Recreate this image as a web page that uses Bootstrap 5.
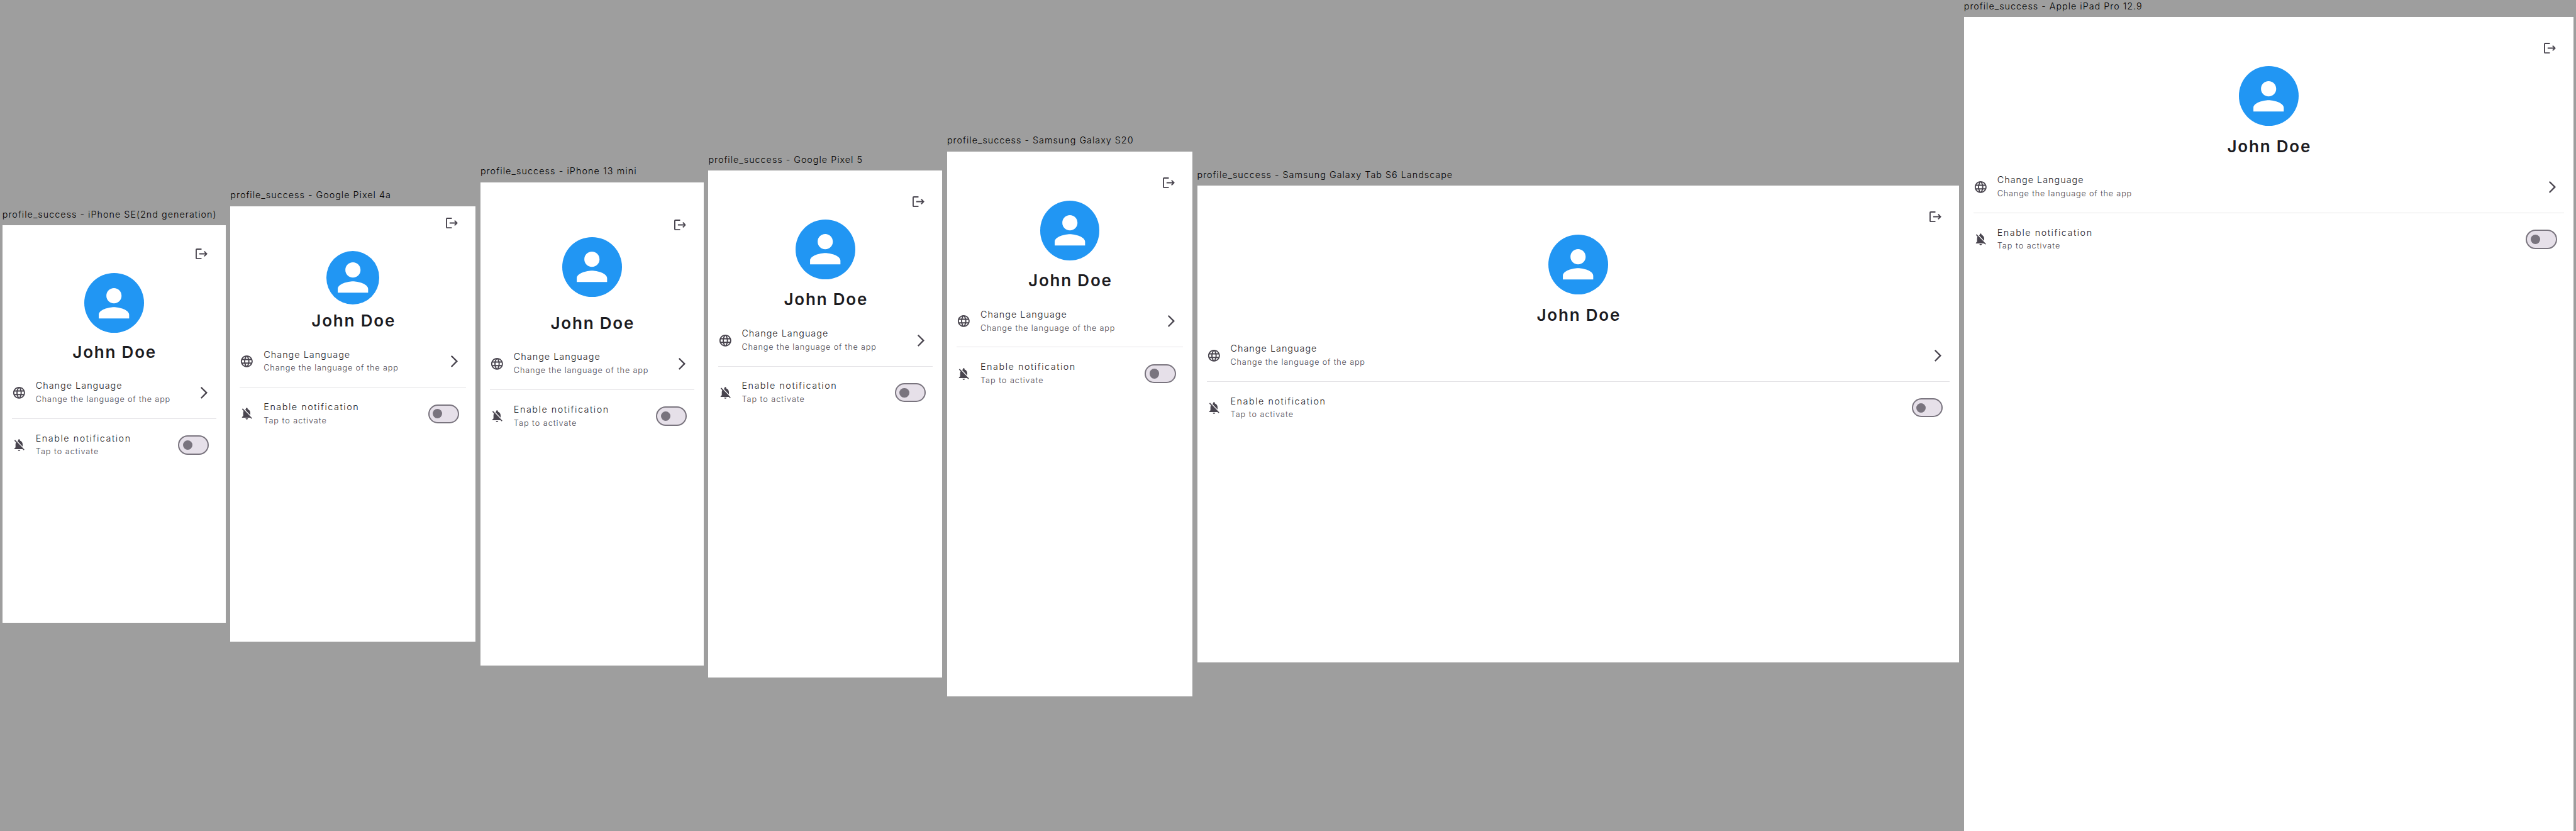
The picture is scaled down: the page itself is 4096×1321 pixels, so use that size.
<!DOCTYPE html>
<html lang="en">
<head>
<meta charset="utf-8">
<meta name="viewport" content="width=device-width, initial-scale=1">
<title>profile_success</title>
<link href="https://cdn.jsdelivr.net/npm/bootstrap@5.3.0/dist/css/bootstrap.min.css" rel="stylesheet">
<style>
  /* 1rem = 10 logical pixels of the device previews */
  html { font-size: 9.46614px; }
  body { background: #9e9e9e; font-family: Inter, sans-serif; font-weight: 300; font-size: 1.52rem; color: #1c1b1f; }
  .board { width: 432.7rem; height: 139.5rem; }
  .device { padding: 0 .4rem; }
  .device-label { height: 2.9rem; line-height: 2.1rem; font-size: 1.52rem; color: #000; }
  .screen { background: #fff; }
  .appbar { height: 5.6rem; padding-right: 3rem; }
  .appbar svg { width: 2rem; height: 1.8rem; color: #49454f; }
  .avatar-slot { height: 12rem; }
  .avatar { width: 10rem; height: 10rem; background: #2196f3; color: #fff; }
  .avatar.compact { width: 8.9rem; height: 8.9rem; }
  .avatar svg { width: 7.65rem; height: 7.65rem; flex: none; }
  .user-name { font: 600 2.75rem/3.3rem Inter, sans-serif; letter-spacing: .19rem; margin: 0 -.19rem .8rem 0; }
  .tile { height: 8.8rem; padding: 0 2.4rem 0 1.6rem; }
  .tile svg { width: 2.4rem; height: 2.4rem; flex: none; color: #49454f; }
  .tile-text { margin-left: 1.6rem; padding-top: .1rem; white-space: nowrap; }
  .tile-title { line-height: 2.2rem; letter-spacing: .106rem; margin-bottom: .1rem; }
  .tile-title.wide { letter-spacing: .161rem; }
  .tile-sub { font-size: 1.34rem; line-height: 2.2rem; letter-spacing: .087rem; color: #49454f; }
  .tile-title.wide + .tile-sub { letter-spacing: .104rem; }
  .rule { height: .1rem; margin: -.1rem 1.6rem 0; background: #e4e3e6; }
  .toggle { width: 5.2rem; height: 3.2rem; margin-right: .4rem; padding: .6rem; border: 2px solid #79747e; background: #e6e0e9; }
  .toggle span { width: 1.6rem; height: 1.6rem; background: #79747e; }
</style>
</head>
<body class="overflow-hidden">
<svg class="d-none" xmlns="http://www.w3.org/2000/svg">
  <symbol id="i-logout" viewBox="0 0 20 18"><path d="M10 1H2.200Q1 1 1 2.200v13.600Q1 17 2.200 17H10M6.200 9h12M14.600 4.900L18.600 9l-4 4.100" fill="none" stroke="currentColor" stroke-width="2"/></symbol>
  <symbol id="i-person" viewBox="0 0 24 24"><path fill="currentColor" d="M12 12c2.210 0 4-1.790 4-4s-1.790-4-4-4-4 1.790-4 4 1.790 4 4 4zm0 2c-2.670 0-8 1.340-8 4v2h16v-2c0-2.660-5.330-4-8-4z"/></symbol>
  <symbol id="i-globe" viewBox="0 0 24 24"><path fill="currentColor" d="M11.990 2C6.470 2 2 6.480 2 12s4.470 10 9.990 10C17.520 22 22 17.520 22 12S17.520 2 11.990 2zm6.930 6h-2.950c-.32-1.250-.78-2.450-1.380-3.560 1.840.63 3.370 1.910 4.330 3.560zM12 4.040c.83 1.200 1.480 2.530 1.910 3.960h-3.820c.43-1.430 1.080-2.760 1.910-3.960zM4.260 14C4.100 13.360 4 12.690 4 12s.1-1.360.26-2h3.380c-.08.66-.14 1.320-.14 2s.06 1.340.14 2H4.260zm.82 2h2.950c.32 1.250.78 2.450 1.380 3.560-1.840-.63-3.370-1.900-4.330-3.560zm2.950-8H5.080c.96-1.660 2.490-2.930 4.330-3.560C8.810 5.550 8.350 6.750 8.030 8zM12 19.960c-.83-1.200-1.480-2.530-1.910-3.960h3.820c-.43 1.430-1.080 2.760-1.910 3.960zM14.340 14H9.660c-.09-.66-.16-1.320-.16-2s.07-1.350.16-2h4.680c.09.65.16 1.320.16 2s-.07 1.340-.16 2zm.25 5.560c.6-1.110 1.060-2.310 1.380-3.560h2.950c-.96 1.650-2.490 2.930-4.330 3.560zM16.360 14c.08-.66.14-1.320.14-2s-.06-1.340-.14-2h3.380c.16.64.26 1.310.26 2s-.1 1.360-.26 2h-3.380z"/></symbol>
  <symbol id="i-chevron" viewBox="0 0 24 24"><path fill="currentColor" d="M6.230 20.230L8 22l10-10L8 2 6.230 3.770 14.460 12z"/></symbol>
  <symbol id="i-bell-off" viewBox="0 0 24 24"><path fill="currentColor" d="M20 18.690L7.840 6.140 5.270 3.490 4 4.760l2.800 2.800v.01c-.52.99-.8 2.160-.8 3.420v5l-2 2v1h13.730l2 2L21 19.720l-1-1.030zM12 22c1.110 0 2-.89 2-2h-4c0 1.110.89 2 2 2zm6-7.320V11c0-3.080-1.640-5.640-4.500-6.320V4c0-.83-.67-1.500-1.500-1.500s-1.500.67-1.500 1.500v.68c-.15.03-.29.08-.42.12-.1.03-.2.07-.3.110h-.01c-.01 0-.01 0-.02.01-.23.09-.46.2-.68.310 0 0-.01 0-.01.01L18 14.680z"/></symbol>
</svg>

<main class="board d-flex align-items-center" id="board"></main>

<script src="https://cdn.jsdelivr.net/npm/bootstrap@5.3.0/dist/js/bootstrap.bundle.min.js"></script>
<script>
  // size and status bar height in logical px; avatar: offset below the app bar; track: label letter spacing
  const devices = [
    { name: 'iPhone SE(2nd generation)', w: 375, h: 667, bar: 20, avatar: 4.5, track: 1.06 },
    { name: 'Google Pixel 4a', w: 412, h: 732, bar: 0, avatar: 20, track: 1.05, compact: true },
    { name: 'iPhone 13 mini', w: 375, h: 812, bar: 44, avatar: -7.7, track: 1.13 },
    { name: 'Google Pixel 5', w: 393, h: 851, bar: 24, avatar: 2.4, track: 1.03 },
    { name: 'Samsung Galaxy S20', w: 412, h: 915, bar: 24, avatar: 2.4, track: 1.04 },
    { name: 'Samsung Galaxy Tab S6 Landscape', w: 1280, h: 800, bar: 24, avatar: 2.4, track: 1.04 },
    { name: 'Apple iPad Pro 12.9', w: 1024, h: 1366, bar: 24, avatar: 2.4, track: 1.04 }
  ];
  const rem = v => (v / 10) + 'rem';
  document.getElementById('board').innerHTML = devices.map(d => `
    <section class="device flex-shrink-0">
      <div class="device-label text-nowrap" style="letter-spacing:${rem(d.track)}">profile_success - ${d.name}</div>
      <div class="screen d-flex flex-column" style="width:${rem(d.w)};height:${rem(d.h)};padding-top:${rem(d.bar)}">
        <div class="appbar d-flex align-items-center justify-content-end flex-shrink-0"><svg><use href="#i-logout"/></svg></div>
        <div class="avatar-slot d-flex justify-content-center align-items-start flex-shrink-0">
          <div class="avatar rounded-circle d-flex align-items-center justify-content-center ${d.compact ? 'compact' : ''}" style="margin-top:${rem(d.avatar)}"><svg><use href="#i-person"/></svg></div>
        </div>
        <h1 class="user-name text-center">John Doe</h1>
        <div class="tile d-flex align-items-center">
          <svg><use href="#i-globe"/></svg>
          <div class="tile-text flex-grow-1"><div class="tile-title">Change Language</div><div class="tile-sub">Change the language of the app</div></div>
          <svg><use href="#i-chevron"/></svg>
        </div>
        <div class="rule"></div>
        <div class="tile d-flex align-items-center">
          <svg><use href="#i-bell-off"/></svg>
          <div class="tile-text flex-grow-1"><div class="tile-title wide">Enable notification</div><div class="tile-sub">Tap to activate</div></div>
          <div class="toggle rounded-pill d-flex align-items-center" role="switch" aria-checked="false"><span class="rounded-circle d-block"></span></div>
        </div>
      </div>
    </section>`).join('');
</script>
</body>
</html>
